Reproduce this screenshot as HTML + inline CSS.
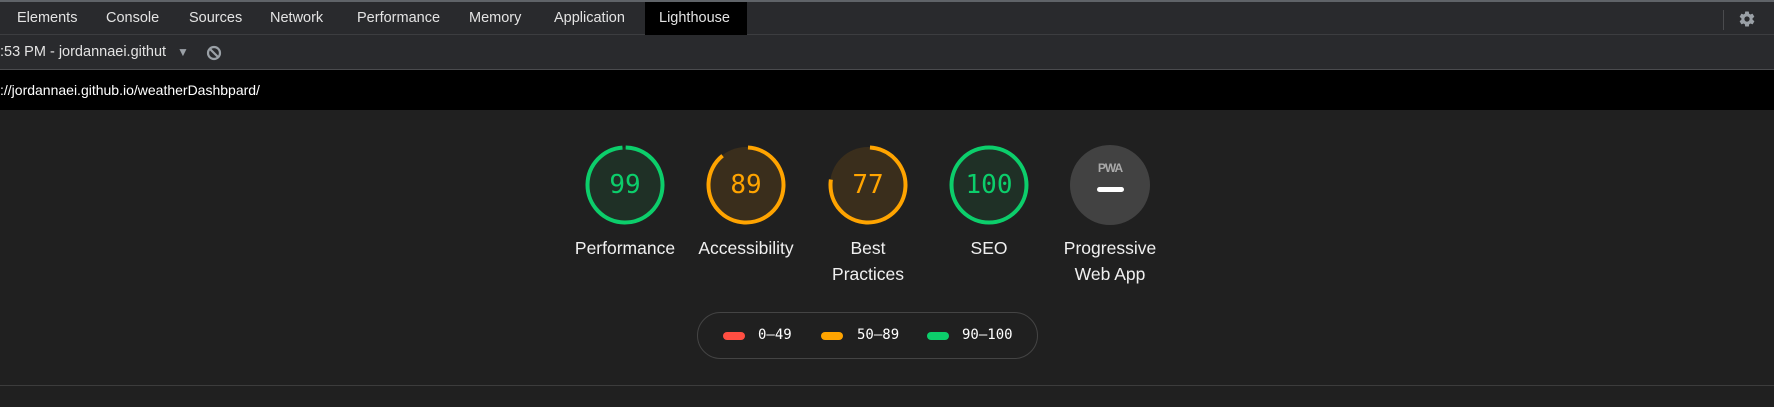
<!DOCTYPE html>
<html><head><meta charset="utf-8"><style>
*{margin:0;padding:0;box-sizing:border-box}
body{width:1774px;height:407px;background:#202020;font-family:"Liberation Sans",Arial,sans-serif;position:relative;overflow:hidden;color:#e8eaed}
.tabbar{position:absolute;left:0;top:0;width:1774px;height:35px;background:#292a2d;border-top:2px solid #5f6368;border-bottom:1px solid #3c3d40}
.tab{position:absolute;top:0;height:33px;line-height:33px;font-size:14.5px;color:#e3e3e3}
.lh{background:#000;padding:0 14px}
.row2{position:absolute;left:0;top:35px;width:1774px;height:35px;background:#292a2d;border-bottom:1px solid #4a4b4e}
.url{position:absolute;left:0;top:70px;width:1774px;height:40px;background:#000;color:#fff;font-size:14px;line-height:40px}
.bottom{position:absolute;left:0;top:385px;width:1774px;height:1px;background:#3c3c3c}
.g{position:absolute;top:145px;width:80px;height:80px}
.g svg{position:absolute;left:0;top:0}
.num{position:absolute;left:0;top:0;width:80px;height:80px;line-height:80px;text-align:center;font-family:"DejaVu Sans Mono","Liberation Mono",monospace;font-size:26px}
.lbl{position:absolute;top:235px;width:140px;text-align:center;font-size:17.5px;line-height:26px;color:#f0f0f0}
.pill{position:absolute;left:697px;top:312px;width:341px;height:47px;border:1px solid #444;border-radius:24px}
.dot{position:absolute;top:332px;width:22px;height:8px;border-radius:4px}
.lt{position:absolute;top:326px;font-family:"DejaVu Sans Mono","Liberation Mono",monospace;font-size:14px;color:#fff;line-height:18px}
</style></head><body>
<div class="tabbar">
<span class="tab" style="left:17px">Elements</span>
<span class="tab" style="left:106px">Console</span>
<span class="tab" style="left:189px">Sources</span>
<span class="tab" style="left:270px">Network</span>
<span class="tab" style="left:357px">Performance</span>
<span class="tab" style="left:469px">Memory</span>
<span class="tab" style="left:554px">Application</span>
<span class="tab lh" style="left:645px;width:102px">Lighthouse</span>
<div style="position:absolute;left:1723px;top:8px;width:1px;height:20px;background:#4a4b4e"></div>
<svg style="position:absolute;left:1738px;top:8px" width="18" height="18" viewBox="0 0 24 24"><path fill="#9aa0a6" d="M19.4 13c.04-.33.06-.66.06-1s-.02-.67-.06-1l2.1-1.65a.5.5 0 0 0 .12-.64l-2-3.460a.5.5 0 0 0-.6-.22l-2.5 1a7.3 7.3 0 0 0-1.7-1l-.38-2.65A.5.5 0 0 0 14 2h-4a.5.5 0 0 0-.5.42l-.38 2.65c-.6.25-1.170.59-1.7 1l-2.5-1a.5.5 0 0 0-.6.22l-2 3.46a.5.5 0 0 0 .12.64L4.56 11c-.04.33-.06.67-.06 1s.02.67.06 1l-2.1 1.65a.5.5 0 0 0-.12.64l2 3.46c.13.22.38.3.6.22l2.5-1c.52.4 1.08.74 1.7 1l.38 2.65c.04.24.25.42.5.42h4c.25 0 .46-.18.5-.42l.38-2.65c.6-.26 1.17-.6 1.7-1l2.5 1c.22.08.47 0 .6-.22l2-3.46a.5.5 0 0 0-.12-.64L19.4 13zM12 15.5a3.5 3.5 0 1 1 0-7 3.5 3.5 0 0 1 0 7z"/></svg>
</div>
<div class="row2">
<span style="position:absolute;left:0;top:0;line-height:34px;font-size:14.5px;color:#e3e3e3;width:172px;overflow:hidden;white-space:nowrap">:53 PM - jordannaei.githut</span>
<span style="position:absolute;left:177px;top:0;line-height:34px;font-size:12px;color:#9aa0a6">▼</span>
<svg style="position:absolute;left:206px;top:10px" width="16" height="16" viewBox="0 0 16 16"><circle cx="8" cy="8" r="6" fill="none" stroke="#9aa0a6" stroke-width="2.2"/><line x1="4" y1="4" x2="12" y2="12" stroke="#9aa0a6" stroke-width="2.2"/></svg>
</div>
<div class="url">://jordannaei.github.io/weatherDashbpard/</div>

<div class="g" style="left:585px"><svg width="80" height="80"><circle cx="40" cy="40" r="38" fill="#1f3026"/><circle cx="40" cy="40" r="37.5" fill="none" stroke="#0cce6b" stroke-width="4" stroke-dasharray="232 300" transform="rotate(-89 40 40)"/></svg><div class="num" style="color:#0cce6b">99</div></div>
<div class="g" style="left:706px"><svg width="80" height="80"><circle cx="40" cy="40" r="38" fill="#3a2e1c"/><circle cx="40" cy="40" r="37.5" fill="none" stroke="#ffa400" stroke-width="4" stroke-dasharray="208 300" transform="rotate(-87 40 40)"/></svg><div class="num" style="color:#ffa400">89</div></div>
<div class="g" style="left:828px"><svg width="80" height="80"><circle cx="40" cy="40" r="38" fill="#3a2e1c"/><circle cx="40" cy="40" r="37.5" fill="none" stroke="#ffa400" stroke-width="4" stroke-dasharray="180 300" transform="rotate(-87 40 40)"/></svg><div class="num" style="color:#ffa400">77</div></div>
<div class="g" style="left:949px"><svg width="80" height="80"><circle cx="40" cy="40" r="38" fill="#1f3026"/><circle cx="40" cy="40" r="37.5" fill="none" stroke="#0cce6b" stroke-width="4"/></svg><div class="num" style="color:#0cce6b">100</div></div>
<div class="g" style="left:1070px"><svg width="80" height="80"><circle cx="40" cy="40" r="40" fill="#424242"/><text x="40" y="27" text-anchor="middle" font-family="Liberation Sans,sans-serif" font-weight="bold" font-size="12" fill="#aaa" letter-spacing="-1">PWA</text><rect x="27" y="42" width="27" height="5" rx="2.5" fill="#fff"/></svg></div>

<div class="lbl" style="left:555px">Performance</div>
<div class="lbl" style="left:676px">Accessibility</div>
<div class="lbl" style="left:798px">Best<br>Practices</div>
<div class="lbl" style="left:919px">SEO</div>
<div class="lbl" style="left:1040px">Progressive<br>Web App</div>

<div class="pill"></div>
<div class="dot" style="left:723px;background:#ff4e42"></div><div class="lt" style="left:758px">0–49</div>
<div class="dot" style="left:821px;background:#ffa400"></div><div class="lt" style="left:857px">50–89</div>
<div class="dot" style="left:927px;background:#0cce6b"></div><div class="lt" style="left:962px">90–100</div>
<div class="bottom"></div>
</body></html>
